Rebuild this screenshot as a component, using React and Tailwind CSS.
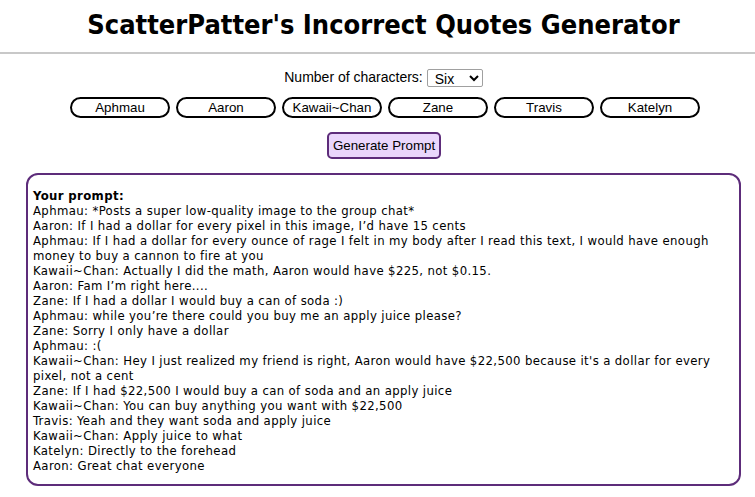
import React from "react";

const names = ["Aphmau", "Aaron", "Kawaii~Chan", "Zane", "Travis", "Katelyn"];
const lines = [
  "Aphmau: *Posts a super low-quality image to the group chat*",
  "Aaron: If I had a dollar for every pixel in this image, I\u2019d have 15 cents",
  "Aphmau: If I had a dollar for every ounce of rage I felt in my body after I read this text, I would have enough money to buy a cannon to fire at you",
  "Kawaii~Chan: Actually I did the math, Aaron would have $225, not $0.15.",
  "Aaron: Fam I\u2019m right here....",
  "Zane: If I had a dollar I would buy a can of soda :)",
  "Aphmau: while you\u2019re there could you buy me an apply juice please?",
  "Zane: Sorry I only have a dollar",
  "Aphmau: :(",
  "Kawaii~Chan: Hey I just realized my friend is right, Aaron would have $22,500 because it's a dollar for every pixel, not a cent",
  "Zane: If I had $22,500 I would buy a can of soda and an apply juice",
  "Kawaii~Chan: You can buy anything you want with $22,500",
  "Travis: Yeah and they want soda and apply juice",
  "Kawaii~Chan: Apply juice to what",
  "Katelyn: Directly to the forehead",
  "Aaron: Great chat everyone",
];

export default function App() {
  return (
    <div className="w-[755px] h-[497px] bg-white text-black overflow-hidden">
      <h1 className="text-center font-bold text-[27px] leading-[34px] pt-[8px] pb-[10px] ml-[12px] font-['DejaVu_Sans_Condensed','Liberation_Sans',sans-serif]">
        ScatterPatter's Incorrect Quotes Generator
      </h1>
      <div className="border-t-2 border-[#c8c8c8]" />
      <div className="flex justify-center items-center gap-[4px] mt-[13px] ml-[12px] text-[14px] font-['Liberation_Sans',Arial,sans-serif]">
        <span>Number of characters:</span>
        <select defaultValue="Six" className="w-[56px] h-[18px] border border-[#a0a0a0] rounded-[2px] px-[3px] text-[14px] bg-white">
          <option>One</option>
          <option>Two</option>
          <option>Three</option>
          <option>Four</option>
          <option>Five</option>
          <option>Six</option>
        </select>
      </div>
      <div className="flex justify-center gap-[6px] mt-[9px] ml-[15px]">
        {names.map((n) => (
          <button key={n} className="w-[100px] h-[21px] border-2 border-black rounded-full bg-white text-[13.33px] leading-none font-['Liberation_Sans',Arial,sans-serif]">
            {n}
          </button>
        ))}
      </div>
      <div className="flex justify-center mt-[14px] ml-[13px]">
        <button className="w-[114px] h-[27px] px-0 border-2 border-[#5d2c7a] rounded-[5px] bg-[#ead6fb] text-[13.33px] font-['Liberation_Sans',Arial,sans-serif]">
          Generate Prompt
        </button>
      </div>
      <div className="mx-[26px] w-[715px] mt-[14px] h-[313px] border-2 border-[#5d2c7a] rounded-[12px] px-[5px] pt-[13px] text-[13px] leading-[15px] tracking-[0.37px] font-['DejaVu_Sans_Condensed','Liberation_Sans',sans-serif]">
        <div className="font-bold">Your prompt:</div>
        {lines.map((l, i) => (
          <div key={i}>{l}</div>
        ))}
      </div>
    </div>
  );
}
